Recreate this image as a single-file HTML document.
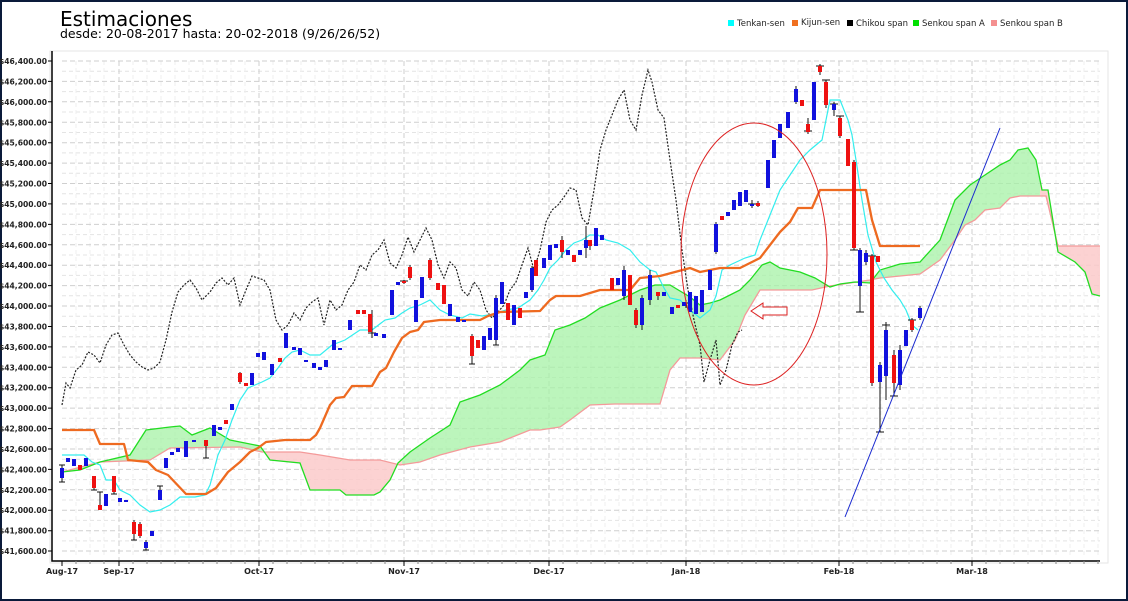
<!DOCTYPE html>
<html><head><meta charset="utf-8"><style>
html,body{margin:0;padding:0;background:#fff}
svg{display:block;font-family:"DejaVu Sans","Liberation Sans",sans-serif}
</style></head><body>
<svg width="1128" height="601" viewBox="0 0 1128 601" xmlns="http://www.w3.org/2000/svg">
<defs>
<clipPath id="pk"><rect x="262" y="0" width="140" height="601"/><rect x="1040" y="0" width="70" height="601"/></clipPath>
<clipPath id="gr"><rect x="50" y="0" width="212" height="601"/><rect x="402" y="0" width="638" height="601"/></clipPath>
</defs>
<rect x="1" y="1" width="1126" height="599" fill="#fff" stroke="#0a1a3a" stroke-width="2"/>
<text x="60" y="26" font-size="20" fill="#000">Estimaciones</text>
<text x="60" y="38" font-size="12.5" fill="#000">desde: 20-08-2017 hasta: 20-02-2018 (9/26/26/52)</text>
<g font-size="8.5" fill="#222">
<rect x="728" y="20" width="6" height="6" fill="#00ffff"/><text x="737" y="26">Tenkan-sen</text>
<rect x="792" y="20" width="6" height="6" fill="#f07020"/><text x="801" y="25">Kijun-sen</text>
<rect x="847" y="20" width="6" height="6" fill="#000"/><text x="856" y="26">Chikou span</text>
<rect x="913" y="20" width="6" height="6" fill="#00e000"/><text x="922" y="26">Senkou span A</text>
<rect x="991" y="20" width="6" height="6" fill="#f49090"/><text x="1000" y="26">Senkou span B</text>
</g>
<rect x="50" y="51" width="1058" height="512" fill="#fff" stroke="#e6e6e6"/>
<g stroke="#e4e4e4" stroke-width="1" stroke-dasharray="4,3">
<path d="M62 71.2H1100M62 91.6H1100M62 112H1100M62 132.5H1100M62 152.9H1100M62 173.3H1100M62 193.7H1100M62 214.1H1100M62 234.6H1100M62 255H1100M62 275.4H1100M62 295.8H1100M62 316.2H1100M62 336.7H1100M62 357.1H1100M62 377.5H1100M62 397.9H1100M62 418.3H1100M62 438.8H1100M62 459.2H1100M62 479.6H1100M62 500H1100M62 520.4H1100M62 540.9H1100"/>
<path d="M76 61V555M90 61V555M104 61V555M133 61V555M147 61V555M161 61V555M175 61V555M189 61V555M203 61V555M217 61V555M231 61V555M245 61V555M273 61V555M287 61V555M301 61V555M315 61V555M329 61V555M343 61V555M357 61V555M371 61V555M385 61V555M418 61V555M432 61V555M446 61V555M460 61V555M474 61V555M488 61V555M502 61V555M516 61V555M530 61V555M563 61V555M577 61V555M591 61V555M605 61V555M619 61V555M633 61V555M647 61V555M661 61V555M700 61V555M714 61V555M728 61V555M742 61V555M756 61V555M770 61V555M784 61V555M798 61V555M812 61V555M853 61V555M867 61V555M881 61V555M895 61V555M909 61V555M923 61V555M937 61V555M951 61V555M986 61V555M1000 61V555M1014 61V555M1028 61V555M1042 61V555M1056 61V555M1070 61V555M1084 61V555M1098 61V555" stroke="#efefef"/>
</g>
<g stroke="#cfcfcf" stroke-width="1" stroke-dasharray="5,3">
<path d="M62 61H1100M62 81.4H1100M62 101.8H1100M62 122.3H1100M62 142.7H1100M62 163.1H1100M62 183.5H1100M62 203.9H1100M62 224.4H1100M62 244.8H1100M62 265.2H1100M62 285.6H1100M62 306H1100M62 326.5H1100M62 346.9H1100M62 367.3H1100M62 387.7H1100M62 408.1H1100M62 428.6H1100M62 449H1100M62 469.4H1100M62 489.8H1100M62 510.2H1100M62 530.7H1100M62 551H1100"/>
<path d="M119 61V560M259 61V560M404 61V560M549 61V560M686 61V560M839 61V560M972 61V560"/>
</g>
<polygon clip-path="url(#gr)" fill="#a6f2a6" fill-opacity="0.75" points="62,472 80,470 100,462 130,455 146,430 170,427 180,426 192,435 210,428 230,440 260,446 270,460 300,463 310,490 340,490 346,495 374,495 380,492 390,480 398,463 410,452 430,438 450,425 460,402 480,395 500,385 520,370 530,360 545,355 555,330 570,325 585,318 600,308 610,304 620,300 640,290 655,285 670,285 690,297 700,305 710,303 720,300 730,295 740,290 750,280 762,265 770,262 780,268 800,272 815,278 830,287 840,284 855,282 870,283 880,270 900,264 920,262 940,240 955,200 970,185 985,175 1000,165 1010,160 1018,150 1028,148 1036,160 1042,190 1048,190 1058,252 1075,262 1085,272 1092,294 1100,296 1100,246 1058,246 1046,196 1020,196 1010,198 1000,208 985,210 975,220 965,225 955,240 940,260 920,274 880,278 870,280 830,286 812,290 760,290 745,315 735,340 720,360 700,358 680,358 670,370 660,404 615,404 590,405 570,420 560,427 540,430 530,430 500,442 470,447 440,455 420,462 400,465 380,460 350,460 320,455 300,452 262,452 240,447 170,448 150,460 100,462"/>
<polygon clip-path="url(#pk)" fill="#fbcaca" fill-opacity="0.85" points="62,472 80,470 100,462 130,455 146,430 170,427 180,426 192,435 210,428 230,440 260,446 270,460 300,463 310,490 340,490 346,495 374,495 380,492 390,480 398,463 410,452 430,438 450,425 460,402 480,395 500,385 520,370 530,360 545,355 555,330 570,325 585,318 600,308 610,304 620,300 640,290 655,285 670,285 690,297 700,305 710,303 720,300 730,295 740,290 750,280 762,265 770,262 780,268 800,272 815,278 830,287 840,284 855,282 870,283 880,270 900,264 920,262 940,240 955,200 970,185 985,175 1000,165 1010,160 1018,150 1028,148 1036,160 1042,190 1048,190 1058,252 1075,262 1085,272 1092,294 1100,296 1100,246 1058,246 1046,196 1020,196 1010,198 1000,208 985,210 975,220 965,225 955,240 940,260 920,274 880,278 870,280 830,286 812,290 760,290 745,315 735,340 720,360 700,358 680,358 670,370 660,404 615,404 590,405 570,420 560,427 540,430 530,430 500,442 470,447 440,455 420,462 400,465 380,460 350,460 320,455 300,452 262,452 240,447 170,448 150,460 100,462"/>
<polyline fill="none" stroke="#f49a9a" stroke-width="1.3" points="62,472 100,462 150,460 170,448 240,447 262,452 300,452 320,455 350,460 380,460 400,465 420,462 440,455 470,447 500,442 530,430 540,430 560,427 570,420 590,405 615,404 660,404 670,370 680,358 700,358 720,360 735,340 745,315 760,290 812,290 830,286 870,280 880,278 920,274 940,260 955,240 965,225 975,220 985,210 1000,208 1010,198 1020,196 1046,196 1058,246 1100,246"/>
<polyline fill="none" stroke="#22dd22" stroke-width="1.3" points="62,472 80,470 100,462 130,455 146,430 170,427 180,426 192,435 210,428 230,440 260,446 270,460 300,463 310,490 340,490 346,495 374,495 380,492 390,480 398,463 410,452 430,438 450,425 460,402 480,395 500,385 520,370 530,360 545,355 555,330 570,325 585,318 600,308 610,304 620,300 640,290 655,285 670,285 690,297 700,305 710,303 720,300 730,295 740,290 750,280 762,265 770,262 780,268 800,272 815,278 830,287 840,284 855,282 870,283 880,270 900,264 920,262 940,240 955,200 970,185 985,175 1000,165 1010,160 1018,150 1028,148 1036,160 1042,190 1048,190 1058,252 1075,262 1085,272 1092,294 1100,296"/>
<polyline fill="none" stroke="#222" stroke-width="1.2" stroke-dasharray="2,1.5" points="62,405 66,383 70,388 76,370 82,365 88,352 94,355 100,363 106,345 112,335 118,333 124,345 130,355 136,362 142,367 148,370 154,368 160,362 166,340 172,312 178,292 184,285 190,280 196,288 202,300 210,292 216,283 222,278 228,285 234,278 240,305 246,290 252,276 258,278 264,280 270,290 276,320 282,330 288,325 294,313 300,320 306,308 312,302 318,298 324,325 330,300 336,310 342,305 348,290 354,282 360,265 366,270 372,255 378,250 384,240 390,263 396,268 402,255 408,237 414,252 420,240 426,228 432,240 438,265 444,278 450,262 456,268 462,290 468,296 474,282 480,290 486,310 492,318 498,312 504,305 510,290 516,282 522,265 528,248 534,270 540,250 546,222 552,210 558,205 564,197 570,188 576,190 582,218 588,225 594,190 600,150 606,130 612,115 618,100 624,90 630,120 636,130 642,95 648,70 652,82 658,110 664,118 670,160 676,200 682,250 688,290 694,320 700,345 704,382 710,360 716,340 720,385 726,370 732,345 738,332 742,330"/>
<polyline fill="none" stroke="#33eeee" stroke-width="1.2" points="62,455 84,455 92,462 100,465 106,480 114,480 120,490 130,495 140,505 150,512 160,510 170,505 180,497 195,497 205,495 210,485 218,455 225,440 232,420 240,400 248,388 255,385 262,382 270,378 278,368 285,358 292,352 300,350 310,355 320,355 332,345 345,340 360,330 372,330 385,320 395,318 402,313 410,308 420,305 430,300 440,310 450,315 462,318 470,314 482,316 494,314 506,310 518,308 530,300 538,290 544,280 550,268 558,260 566,250 574,243 582,240 590,235 598,235 606,240 618,243 630,250 640,262 650,270 656,272 664,288 670,298 680,300 690,310 700,318 710,310 716,296 722,270 730,265 745,258 755,255 760,240 766,225 772,210 780,190 790,175 800,160 810,150 822,140 830,100 840,100 848,120 852,135 856,160 862,200 868,235 876,262 884,278 892,290 900,300 906,310 912,325 918,330"/>
<polyline fill="none" stroke="#ee6a20" stroke-width="2.3" stroke-linejoin="round" points="62,430 94,430 100,444 124,444 128,460 148,462 156,470 168,475 186,494 206,494 216,488 222,480 228,472 240,462 250,452 258,448 266,442 285,440 310,440 316,435 320,428 330,405 336,398 344,397 352,386 372,386 380,372 386,368 394,352 402,338 410,332 418,330 424,322 440,320 480,320 488,316 500,312 540,311 550,300 556,296 580,296 600,290 630,290 640,278 660,276 690,268 700,272 720,268 740,268 760,258 780,232 790,222 798,208 812,208 820,190 866,190 872,220 880,246 920,246"/>
<path fill="none" stroke="#111" stroke-width="1" d="M62 465V482M59 465h6M59 482h6M94 476V490M91 490h6M100 492V510M97 492h6M114 476V494M111 494h6M134 520V540M131 540h6M140 522V538M146 540V550M143 550h6M160 486V500M157 486h6M206 440V458M203 458h6M240 372V384M372 310V338M368 333h8M404 280V284M400 281h8M410 265V280M430 258V280M472 334V364M469 364h6M496 295V345M493 345h6M532 266V292M562 236V258M586 226V258M590 240V250M624 266V300M636 308V328M642 295V330M650 270V305M658 292V300M686 300V308M682 303h8M716 222V254M752 200V208M748 204h8M758 201V207M796 86V104M808 118V134M804 131h8M820 64V75M816 66h8M826 80V108M822 80h8M834 102V116M830 104h8M840 116V138M836 116h8M854 160V250M850 250h8M860 248V312M856 312h8M866 250V265M872 254V386M868 256h8M880 362V432M876 432h8M886 322V400M882 325h8M894 350V396M890 396h8M900 345V390M912 318V332M908 320h8M920 306V320"/>
<g fill="#1111dd">
<rect x="60" y="468" width="4" height="10"/><rect x="66" y="458" width="4" height="4"/><rect x="72" y="459" width="4" height="7"/><rect x="84" y="458" width="4" height="8"/><rect x="104" y="494" width="4" height="12"/><rect x="118" y="498" width="4" height="4"/><rect x="124" y="500" width="4" height="2"/><rect x="144" y="542" width="4" height="6"/><rect x="150" y="531" width="4" height="5"/><rect x="158" y="490" width="4" height="10"/><rect x="164" y="458" width="4" height="10"/><rect x="170" y="452" width="4" height="3"/><rect x="176" y="448" width="4" height="4"/><rect x="184" y="441" width="4" height="16"/><rect x="192" y="440" width="4" height="2"/><rect x="212" y="425" width="4" height="11"/><rect x="218" y="427" width="4" height="3"/><rect x="230" y="404" width="4" height="6"/><rect x="250" y="373" width="4" height="12"/><rect x="256" y="353" width="4" height="4"/><rect x="262" y="352" width="4" height="8"/><rect x="270" y="364" width="4" height="11"/><rect x="284" y="333" width="4" height="15"/><rect x="292" y="347" width="4" height="3"/><rect x="298" y="348" width="4" height="7"/><rect x="304" y="360" width="4" height="2"/><rect x="312" y="363" width="4" height="5"/><rect x="318" y="367" width="4" height="3"/><rect x="324" y="360" width="4" height="7"/><rect x="332" y="340" width="4" height="10"/><rect x="338" y="348" width="4" height="2"/><rect x="348" y="320" width="4" height="10"/><rect x="374" y="333" width="4" height="3"/><rect x="382" y="334" width="4" height="4"/><rect x="390" y="290" width="4" height="25"/><rect x="396" y="282" width="4" height="3"/><rect x="414" y="300" width="4" height="22"/><rect x="420" y="277" width="4" height="21"/><rect x="448" y="304" width="4" height="12"/><rect x="456" y="317" width="4" height="5"/><rect x="462" y="320" width="4" height="2"/><rect x="482" y="336" width="4" height="14"/><rect x="488" y="328" width="4" height="12"/><rect x="494" y="298" width="4" height="42"/><rect x="500" y="282" width="4" height="22"/><rect x="512" y="305" width="4" height="20"/><rect x="524" y="292" width="4" height="6"/><rect x="530" y="268" width="4" height="22"/><rect x="542" y="258" width="4" height="10"/><rect x="548" y="245" width="4" height="15"/><rect x="554" y="244" width="4" height="4"/><rect x="566" y="250" width="4" height="5"/><rect x="578" y="250" width="4" height="5"/><rect x="584" y="240" width="4" height="8"/><rect x="594" y="228" width="4" height="18"/><rect x="600" y="235" width="4" height="5"/><rect x="616" y="278" width="4" height="7"/><rect x="622" y="270" width="4" height="26"/><rect x="640" y="298" width="4" height="27"/><rect x="648" y="275" width="4" height="25"/><rect x="662" y="292" width="4" height="4"/><rect x="670" y="307" width="4" height="7"/><rect x="682" y="302" width="4" height="4"/><rect x="688" y="292" width="4" height="20"/><rect x="694" y="296" width="4" height="18"/><rect x="700" y="290" width="4" height="22"/><rect x="708" y="270" width="4" height="20"/><rect x="714" y="224" width="4" height="28"/><rect x="726" y="212" width="4" height="4"/><rect x="732" y="200" width="4" height="10"/><rect x="738" y="192" width="4" height="14"/><rect x="744" y="190" width="4" height="12"/><rect x="750" y="204" width="4" height="2"/><rect x="766" y="160" width="4" height="28"/><rect x="772" y="140" width="4" height="18"/><rect x="778" y="124" width="4" height="14"/><rect x="786" y="112" width="4" height="16"/><rect x="794" y="89" width="4" height="13"/><rect x="812" y="82" width="4" height="38"/><rect x="832" y="104" width="4" height="6"/><rect x="858" y="250" width="4" height="36"/><rect x="864" y="253" width="4" height="9"/><rect x="878" y="365" width="4" height="17"/><rect x="884" y="330" width="4" height="46"/><rect x="898" y="350" width="4" height="35"/><rect x="904" y="330" width="4" height="16"/><rect x="918" y="308" width="4" height="10"/>
</g>
<g fill="#ee1111">
<rect x="78" y="465" width="4" height="5"/><rect x="92" y="476" width="4" height="12"/><rect x="98" y="505" width="4" height="5"/><rect x="112" y="476" width="4" height="16"/><rect x="132" y="522" width="4" height="12"/><rect x="138" y="524" width="4" height="12"/><rect x="204" y="440" width="4" height="6"/><rect x="224" y="420" width="4" height="4"/><rect x="238" y="373" width="4" height="9"/><rect x="244" y="383" width="4" height="3"/><rect x="278" y="358" width="4" height="4"/><rect x="356" y="310" width="4" height="4"/><rect x="362" y="310" width="4" height="4"/><rect x="368" y="314" width="4" height="18"/><rect x="402" y="281" width="4" height="2"/><rect x="408" y="267" width="4" height="11"/><rect x="428" y="260" width="4" height="18"/><rect x="436" y="283" width="4" height="7"/><rect x="442" y="285" width="4" height="19"/><rect x="470" y="336" width="4" height="20"/><rect x="476" y="340" width="4" height="8"/><rect x="506" y="303" width="4" height="17"/><rect x="518" y="308" width="4" height="10"/><rect x="534" y="260" width="4" height="16"/><rect x="560" y="240" width="4" height="12"/><rect x="572" y="255" width="4" height="7"/><rect x="588" y="240" width="4" height="6"/><rect x="610" y="278" width="4" height="12"/><rect x="628" y="275" width="4" height="30"/><rect x="634" y="310" width="4" height="15"/><rect x="656" y="292" width="4" height="4"/><rect x="676" y="305" width="4" height="3"/><rect x="720" y="216" width="4" height="4"/><rect x="756" y="203" width="4" height="3"/><rect x="800" y="100" width="4" height="6"/><rect x="806" y="124" width="4" height="8"/><rect x="818" y="66" width="4" height="6"/><rect x="824" y="82" width="4" height="23"/><rect x="838" y="118" width="4" height="18"/><rect x="846" y="139" width="4" height="27"/><rect x="852" y="162" width="4" height="86"/><rect x="870" y="256" width="4" height="127"/><rect x="876" y="256" width="4" height="6"/><rect x="892" y="355" width="4" height="28"/><rect x="910" y="320" width="4" height="10"/>
</g>
<line x1="845" y1="517" x2="1000" y2="128" stroke="#1a2ad0" stroke-width="1"/>
<ellipse cx="754" cy="254" rx="73" ry="131" fill="none" stroke="#dd2222" stroke-width="1"/>
<polygon points="751,311 763,303 763,307 787,307 787,315 763,315 763,319" fill="none" stroke="#dd2222" stroke-width="1"/>
<path d="M52 51V561H1100" fill="none" stroke="#000" stroke-width="1.5"/>
<path stroke="#000" d="M48 61h4M48 81.4h4M48 101.8h4M48 122.3h4M48 142.7h4M48 163.1h4M48 183.5h4M48 203.9h4M48 224.4h4M48 244.8h4M48 265.2h4M48 285.6h4M48 306h4M48 326.5h4M48 346.9h4M48 367.3h4M48 387.7h4M48 408.1h4M48 428.6h4M48 449h4M48 469.4h4M48 489.8h4M48 510.2h4M48 530.7h4M48 551h4M62 561v5M119 561v5M259 561v5M404 561v5M549 561v5M686 561v5M839 561v5M972 561v5"/>
<path stroke="#888" d="M76 561v3M90 561v3M104 561v3M133 561v3M147 561v3M161 561v3M175 561v3M189 561v3M203 561v3M217 561v3M231 561v3M245 561v3M273 561v3M287 561v3M301 561v3M315 561v3M329 561v3M343 561v3M357 561v3M371 561v3M385 561v3M418 561v3M432 561v3M446 561v3M460 561v3M474 561v3M488 561v3M502 561v3M516 561v3M530 561v3M563 561v3M577 561v3M591 561v3M605 561v3M619 561v3M633 561v3M647 561v3M661 561v3M700 561v3M714 561v3M728 561v3M742 561v3M756 561v3M770 561v3M784 561v3M798 561v3M812 561v3M853 561v3M867 561v3M881 561v3M895 561v3M909 561v3M923 561v3M937 561v3M951 561v3M986 561v3M1000 561v3M1014 561v3M1028 561v3M1042 561v3M1056 561v3M1070 561v3M1084 561v3M1098 561v3"/>
<g font-size="7.6" font-weight="bold" fill="#222" text-anchor="end">
<text x="47" y="64">$46,400.00</text><text x="47" y="84.4">$46,200.00</text><text x="47" y="104.8">$46,000.00</text><text x="47" y="125.3">$45,800.00</text><text x="47" y="145.7">$45,600.00</text><text x="47" y="166.1">$45,400.00</text><text x="47" y="186.5">$45,200.00</text><text x="47" y="206.9">$45,000.00</text><text x="47" y="227.4">$44,800.00</text><text x="47" y="247.8">$44,600.00</text><text x="47" y="268.2">$44,400.00</text><text x="47" y="288.6">$44,200.00</text><text x="47" y="309">$44,000.00</text><text x="47" y="329.5">$43,800.00</text><text x="47" y="349.9">$43,600.00</text><text x="47" y="370.3">$43,400.00</text><text x="47" y="390.7">$43,200.00</text><text x="47" y="411.1">$43,000.00</text><text x="47" y="431.6">$42,800.00</text><text x="47" y="452">$42,600.00</text><text x="47" y="472.4">$42,400.00</text><text x="47" y="492.8">$42,200.00</text><text x="47" y="513.2">$42,000.00</text><text x="47" y="533.7">$41,800.00</text><text x="47" y="554">$41,600.00</text>
</g>
<g font-size="8" font-weight="bold" fill="#222" text-anchor="middle">
<text x="62" y="574">Aug-17</text><text x="119" y="574">Sep-17</text><text x="259" y="574">Oct-17</text><text x="404" y="574">Nov-17</text><text x="549" y="574">Dec-17</text><text x="686" y="574">Jan-18</text><text x="839" y="574">Feb-18</text><text x="972" y="574">Mar-18</text>
</g>
</svg>
</body></html>
